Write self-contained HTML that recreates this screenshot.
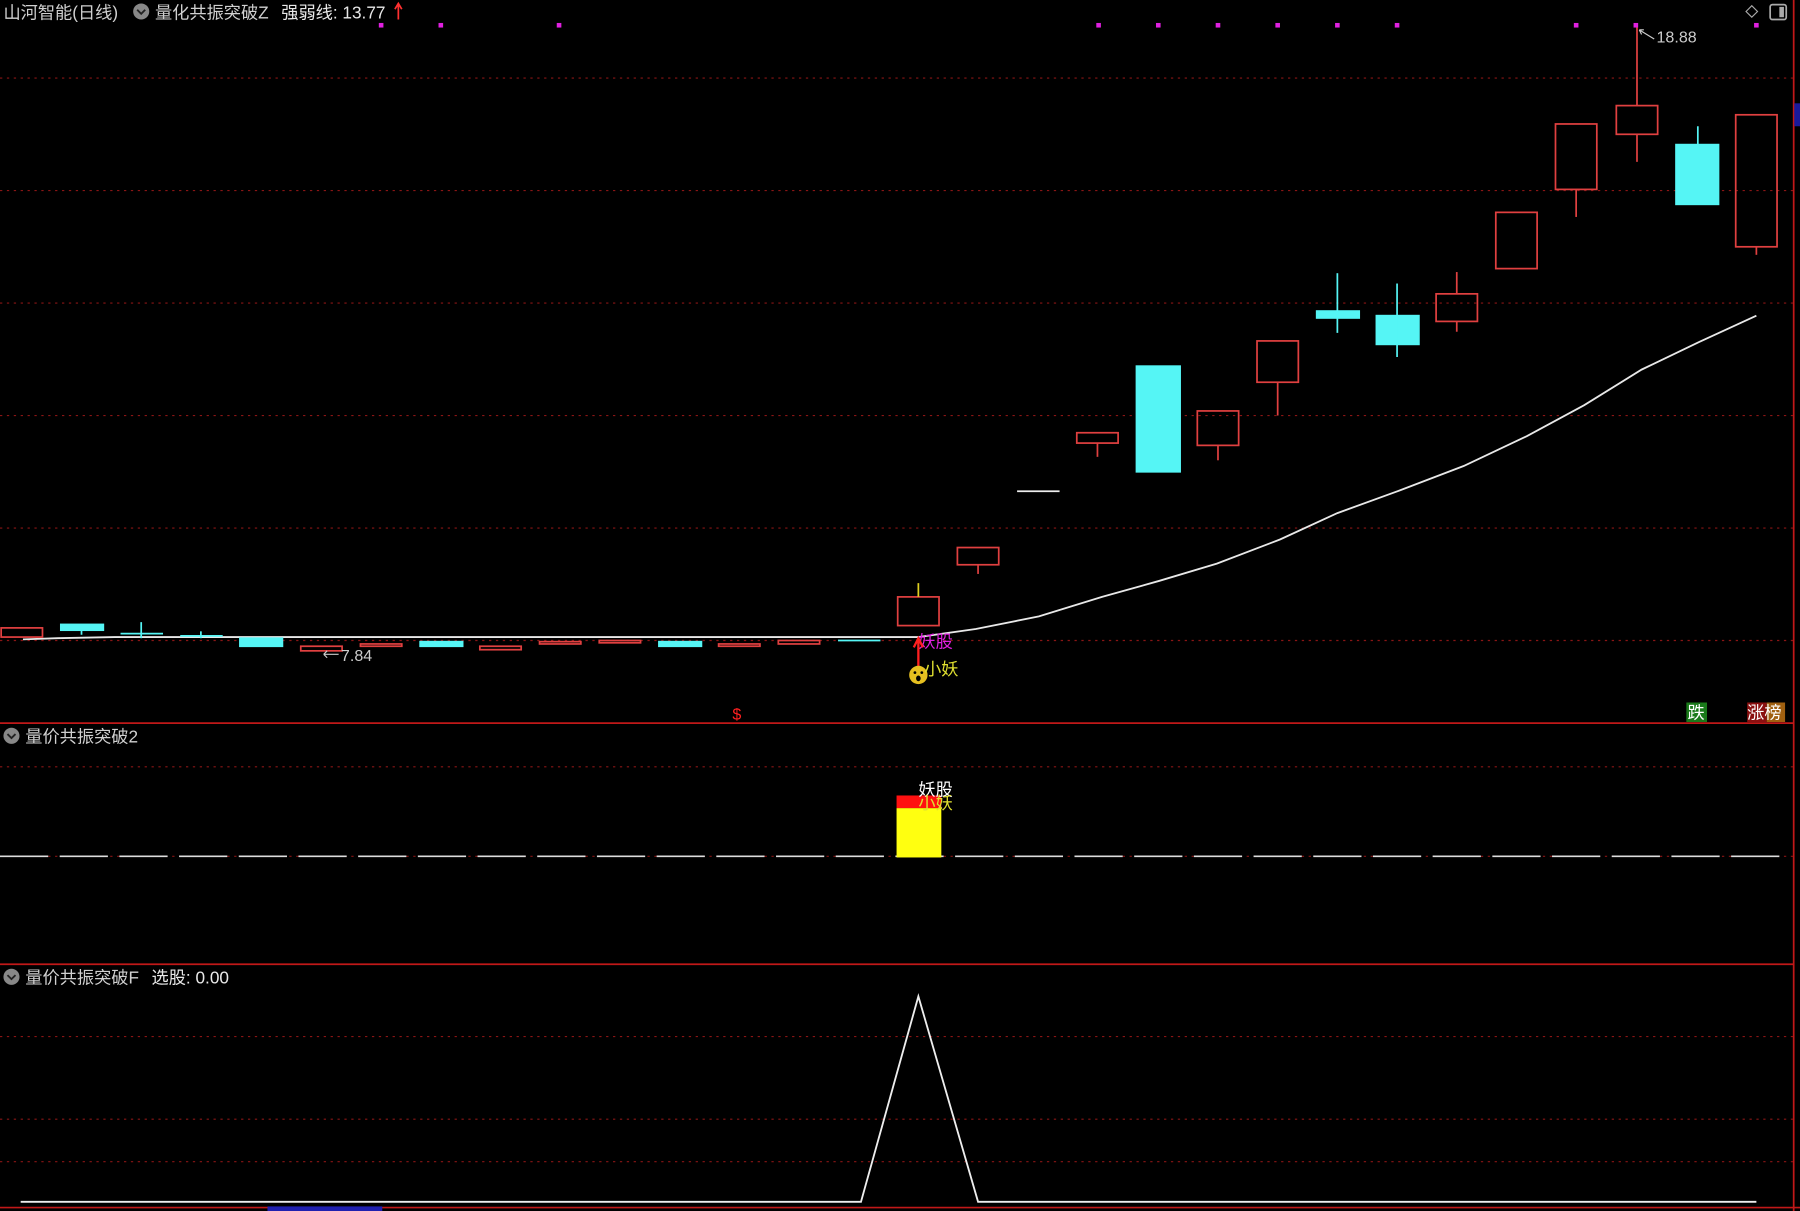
<!DOCTYPE html>
<html><head><meta charset="utf-8"><style>
html,body{margin:0;padding:0;background:#000;overflow:hidden}
svg{display:block}
text{font-family:"Liberation Sans","Noto Sans CJK SC",sans-serif}
</style></head><body>
<svg width="1800" height="1211" viewBox="0 0 1568 1055" preserveAspectRatio="none" xmlns="http://www.w3.org/2000/svg">
<rect width="1568" height="1055" fill="#000"/>
<g stroke="#8a1515" stroke-width="1" stroke-dasharray="2,4">
<line x1="0" y1="68" x2="1562" y2="68"/><line x1="0" y1="166" x2="1562" y2="166"/>
<line x1="0" y1="264" x2="1562" y2="264"/><line x1="0" y1="362" x2="1562" y2="362"/>
<line x1="0" y1="460" x2="1562" y2="460"/><line x1="0" y1="558" x2="1562" y2="558"/>
<line x1="0" y1="668" x2="1562" y2="668"/><line x1="0" y1="746" x2="1562" y2="746"/>
<line x1="0" y1="903" x2="1562" y2="903"/><line x1="0" y1="975" x2="1562" y2="975"/>
<line x1="0" y1="1012" x2="1562" y2="1012"/>
</g>
<g stroke="#c01818" stroke-width="1.5">
<line x1="0" y1="630" x2="1562" y2="630"/><line x1="0" y1="840" x2="1562" y2="840"/>
<line x1="0" y1="1052" x2="1568" y2="1052"/>
<line x1="1562.5" y1="0" x2="1562.5" y2="1055"/>
</g>
<rect x="1563" y="90" width="5" height="20" fill="#1a1a9a"/>
<rect x="233" y="1051" width="100" height="4" fill="#2020b0"/>
<!-- MA line -->
<polyline fill="none" stroke="#e8e8e8" stroke-width="1.6" points="20,557 50,556 100,555 200,555 400,555 700,555 800,555 850,548 905,537 960,520 1010,506 1060,491 1115,470 1165,447 1220,427 1275,406 1330,380 1380,353 1430,322 1480,298 1530,275"/>
<!-- candles -->
<g stroke="#e04040" stroke-width="1.5" fill="none">
<rect x="1" y="547" width="36" height="8"/>
<rect x="262" y="563" width="36" height="4"/>
<rect x="314" y="561" width="36" height="2"/>
<rect x="418" y="563" width="36" height="3"/>
<rect x="470" y="559" width="36" height="2"/>
<rect x="522" y="558" width="36" height="2"/>
<rect x="626" y="561" width="36" height="2"/>
<rect x="678" y="558" width="36" height="3"/>
<rect x="782" y="520" width="36" height="25"/>
<rect x="834" y="477" width="36" height="15"/><line x1="852" y1="492" x2="852" y2="500"/>
<rect x="938" y="377" width="36" height="9"/><line x1="956" y1="386" x2="956" y2="398"/>
<rect x="1043" y="358" width="36" height="30"/><line x1="1061" y1="388" x2="1061" y2="401"/>
<rect x="1095" y="297" width="36" height="36"/><line x1="1113" y1="333" x2="1113" y2="362"/>
<rect x="1251" y="256" width="36" height="24"/><line x1="1269" y1="237" x2="1269" y2="256"/><line x1="1269" y1="280" x2="1269" y2="289"/>
<rect x="1303" y="185" width="36" height="49"/>
<rect x="1355" y="108" width="36" height="57"/><line x1="1373" y1="165" x2="1373" y2="189"/>
<rect x="1408" y="92" width="36" height="25"/><line x1="1426" y1="22" x2="1426" y2="92"/><line x1="1426" y1="117" x2="1426" y2="141"/>
<rect x="1512" y="100" width="36" height="115"/><line x1="1530" y1="215" x2="1530" y2="222"/>
</g>
<line x1="800" y1="508" x2="800" y2="520" stroke="#e0d020" stroke-width="1.5"/>
<g fill="#55f5f5" stroke="#55f5f5" stroke-width="1.5">
<rect x="53" y="544" width="37" height="5"/><line x1="71" y1="549" x2="71" y2="553"/>
<line x1="105" y1="552" x2="142" y2="552"/><line x1="123" y1="542" x2="123" y2="556"/>
<line x1="157" y1="554" x2="194" y2="554"/><line x1="175" y1="550" x2="175" y2="556"/>
<rect x="209" y="556" width="37" height="7"/>
<rect x="366" y="559" width="37" height="4"/>
<rect x="574" y="559" width="37" height="4"/>
<line x1="730" y1="558" x2="767" y2="558"/>
<rect x="990" y="319" width="38" height="92"/>
<rect x="1147" y="271" width="37" height="6"/><line x1="1165" y1="238" x2="1165" y2="290"/>
<rect x="1199" y="275" width="37" height="25"/><line x1="1217" y1="247" x2="1217" y2="311"/>
<rect x="1460" y="126" width="37" height="52"/><line x1="1479" y1="110" x2="1479" y2="126"/>
</g>
<line x1="886" y1="428" x2="923" y2="428" stroke="#eee" stroke-width="1.5"/>
<g fill="#e020e0">
<rect x="330" y="20" width="4" height="4"/><rect x="382" y="20" width="4" height="4"/><rect x="485" y="20" width="4" height="4"/>
<rect x="955" y="20" width="4" height="4"/><rect x="1007" y="20" width="4" height="4"/><rect x="1059" y="20" width="4" height="4"/>
<rect x="1111" y="20" width="4" height="4"/><rect x="1163" y="20" width="4" height="4"/><rect x="1215" y="20" width="4" height="4"/>
<rect x="1371" y="20" width="4" height="4"/><rect x="1423" y="20" width="4" height="4"/><rect x="1528" y="20" width="4" height="4"/>
</g>
<!-- header -->
<text x="3" y="16" font-size="15" fill="#d0d0d0">山河智能(日线)</text>
<circle cx="123" cy="10" r="7" fill="#888"/><path d="M119.5 8.5 L123 12 L126.5 8.5" stroke="#222" stroke-width="1.6" fill="none"/>
<text x="135" y="16" font-size="15" fill="#d0d0d0">量化共振突破Z</text>
<text x="245" y="16" font-size="15" fill="#e8e8e8">强弱线: 13.77</text>
<path d="M347 17 L347 4 M344 8 L347 3 L350 8" stroke="#ff3030" stroke-width="1.5" fill="none"/>
<path d="M1521 10 L1526 5 L1531 10 L1526 15 Z" stroke="#aaa" fill="none"/>
<rect x="1542" y="4" width="14" height="13" rx="2" stroke="#aaa" fill="none" stroke-width="1.5"/><rect x="1550" y="6" width="4" height="9" fill="#aaa"/>
<text x="1443" y="37" font-size="14" fill="#ccc">18.88</text>
<path d="M1428 26 L1441 34 M1428 26 l4 0 M1428 26 l2 4" stroke="#ccc" fill="none"/>
<text x="297" y="576" font-size="14" fill="#ccc">7.84</text>
<path d="M282 570 L295 570 M282 570 l3 -3 M282 570 l3 3" stroke="#ccc" fill="none"/>
<text x="800" y="564" font-size="15" fill="#e020e0">妖股</text>
<path d="M800 582 L800 558 M796 564 L800 556 L804 564" stroke="#ff2020" stroke-width="2" fill="none"/>
<circle cx="800" cy="588" r="8" fill="#e6c020"/><circle cx="797" cy="586" r="1.2" fill="#000"/><circle cx="803" cy="586" r="1.2" fill="#000"/><ellipse cx="800" cy="591" rx="2" ry="2.5" fill="#000"/>
<text x="805" y="588" font-size="15" fill="#e0e030">小妖</text>
<text x="638" y="627" font-size="14" fill="#ff2020">$</text>
<rect x="1469" y="612" width="18" height="17" fill="#1a7a1a"/><text x="1470" y="626" font-size="15" fill="#fff">跌</text>
<rect x="1522" y="612" width="17" height="17" fill="#8a1010"/><rect x="1539" y="612" width="16" height="17" fill="#a06010"/><text x="1522" y="626" font-size="15" fill="#fff">涨榜</text>
<!-- panel 2 -->
<circle cx="10" cy="641" r="7" fill="#888"/><path d="M6.5 639.5 L10 643 L13.5 639.5" stroke="#222" stroke-width="1.6" fill="none"/>
<text x="22" y="647" font-size="15" fill="#d0d0d0">量价共振突破2</text>
<line x1="0" y1="746" x2="1550" y2="746" stroke="#ddd" stroke-width="1.5" stroke-dasharray="42,10"/>
<rect x="781" y="704" width="39" height="43" fill="#ffff10"/>
<rect x="781" y="693" width="39" height="11" fill="#ff1010"/>
<text x="800" y="693" font-size="15" fill="#fff">妖股</text>
<text x="800" y="705" font-size="15" fill="#e0e030">小妖</text>
<!-- panel 3 -->
<circle cx="10" cy="851" r="7" fill="#888"/><path d="M6.5 849.5 L10 853 L13.5 849.5" stroke="#222" stroke-width="1.6" fill="none"/>
<text x="22" y="857" font-size="15" fill="#d0d0d0">量价共振突破F</text>
<text x="132" y="857" font-size="15" fill="#e8e8e8">选股: 0.00</text>
<polyline fill="none" stroke="#eee" stroke-width="1.6" points="18,1047 750,1047 800,868 852,1047 1530,1047"/>
</svg>
</body></html>
